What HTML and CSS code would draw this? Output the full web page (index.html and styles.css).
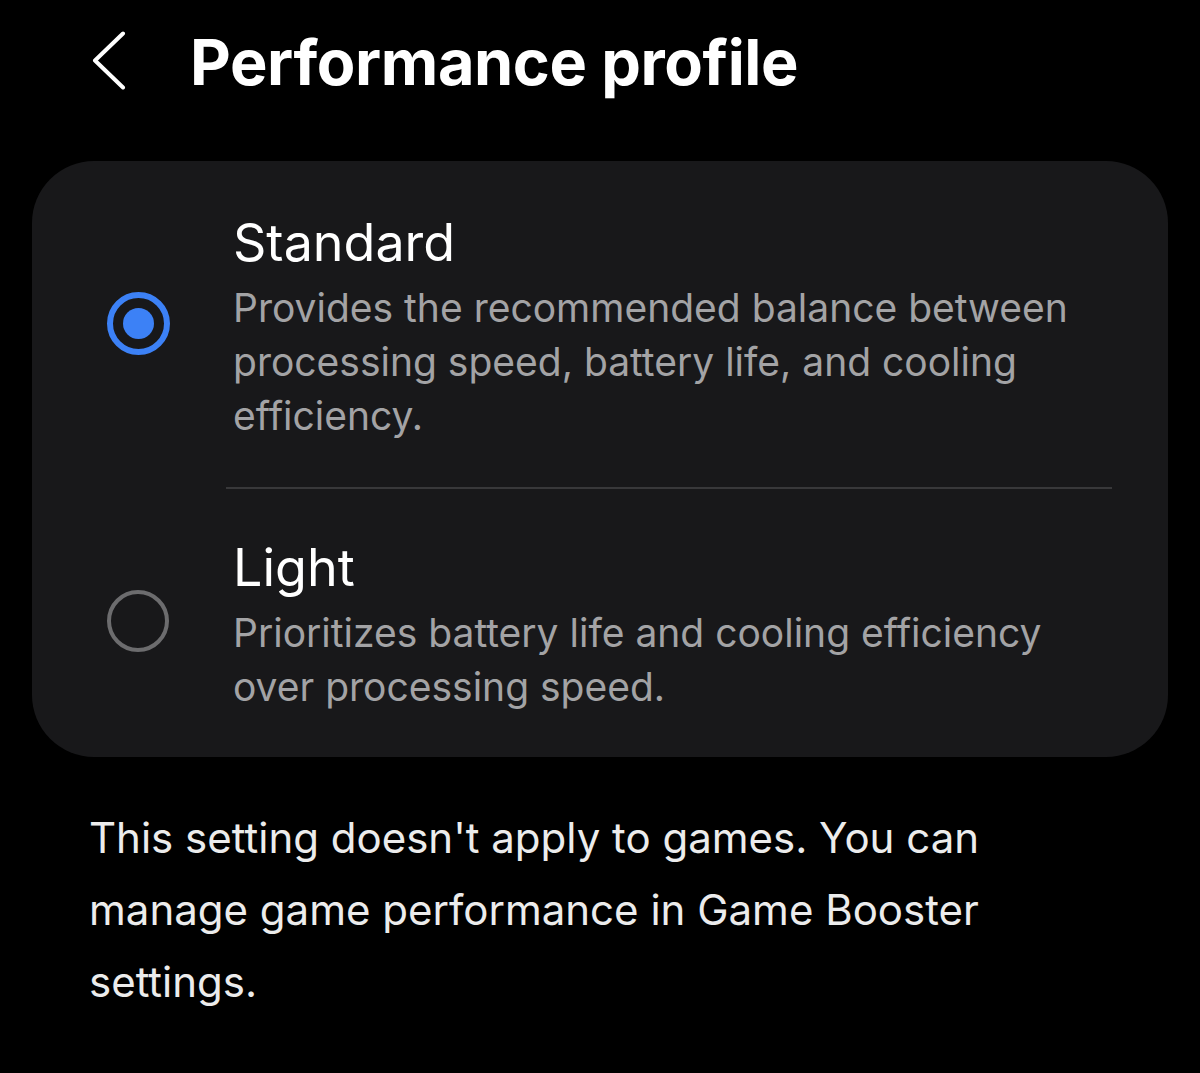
FILE: index.html
```html
<!DOCTYPE html>
<html lang="en">
<head>
<meta charset="utf-8">
<title>Performance profile</title>
<link rel="stylesheet" href="styles.css">
</head>
<body>
<div class="screen">
  <header class="topbar">
    <button class="back" aria-label="Back">
      <svg width="34" height="59" viewBox="0 0 34 59"><path d="M31 2.5 L3 29.5 L31 56.5" fill="none" stroke="#ffffff" stroke-width="4" stroke-linecap="round" stroke-linejoin="round"/></svg>
    </button>
    <h1 class="title">Performance profile</h1>
  </header>

  <section class="card">
    <div class="option">
      <div class="radio-cell"><span class="radio checked"></span></div>
      <div class="option-text">
        <div class="option-title">Standard</div>
        <div class="option-desc">Provides the recommended balance between processing speed, battery life, and cooling efficiency.</div>
      </div>
    </div>
    <div class="divider"></div>
    <div class="option">
      <div class="radio-cell"><span class="radio"></span></div>
      <div class="option-text">
        <div class="option-title">Light</div>
        <div class="option-desc">Prioritizes battery life and cooling efficiency over processing speed.</div>
      </div>
    </div>
  </section>

  <p class="note">This setting doesn't apply to games. You can manage game performance in Game Booster settings.</p>
</div>
</body>
</html>
```

FILE: styles.css
```css
html, body {
  margin: 0;
  padding: 0;
  background: #000000;
}
body {
  font-family: Inter, "Noto Sans", sans-serif;
  color: #ffffff;
  width: 1200px;
  height: 1073px;
  overflow: hidden;
}
.screen {
  display: flex;
  flex-direction: column;
}
.topbar {
  display: flex;
  align-items: flex-start;
  height: 126px;
  box-sizing: border-box;
  padding: 22px 0 0 92px;
}
.back {
  background: none;
  border: 0;
  padding: 0;
  margin-top: 9px;
  width: 98px;
  height: 59px;
  display: flex;
  align-items: flex-start;
}
.title {
  margin: 0;
  font-size: 63px;
  font-weight: 700;
  letter-spacing: -0.4px;
  line-height: 80px;
}
.card {
  margin: 35px 32px 0 32px;
  background: #18181a;
  border-radius: 62px;
  padding: 48px 56px 43px 0;
  display: flex;
  flex-direction: column;
}
.option {
  display: flex;
}
.radio-cell {
  width: 126px;
  padding-left: 75px;
  padding-bottom: 6px;
  display: flex;
  align-items: center;
}
.radio {
  width: 62px;
  height: 62px;
  box-sizing: border-box;
  border-radius: 50%;
  border: 4px solid #6c6c6e;
  position: relative;
}
.radio.checked {
  width: 63px;
  height: 63px;
  border: 6px solid #3c81f6;
}
.radio.checked::after {
  content: "";
  position: absolute;
  left: 10px;
  top: 10px;
  width: 31px;
  height: 31px;
  border-radius: 50%;
  background: #3c81f6;
}
.option-text {
  flex: 1;
}
.option-title {
  font-size: 52px;
  line-height: 68px;
  color: #ffffff;
}
.option-desc {
  margin-top: 4px;
  font-size: 39px;
  line-height: 54px;
  color: #a3a3a5;
}
.divider {
  height: 2px;
  background: #38383a;
  margin: 44px 0 45px 194px;
}
.note {
  margin: 45px 0 0 89px;
  width: 1010px;
  font-size: 42px;
  line-height: 72px;
  color: #ececec;
}
```
